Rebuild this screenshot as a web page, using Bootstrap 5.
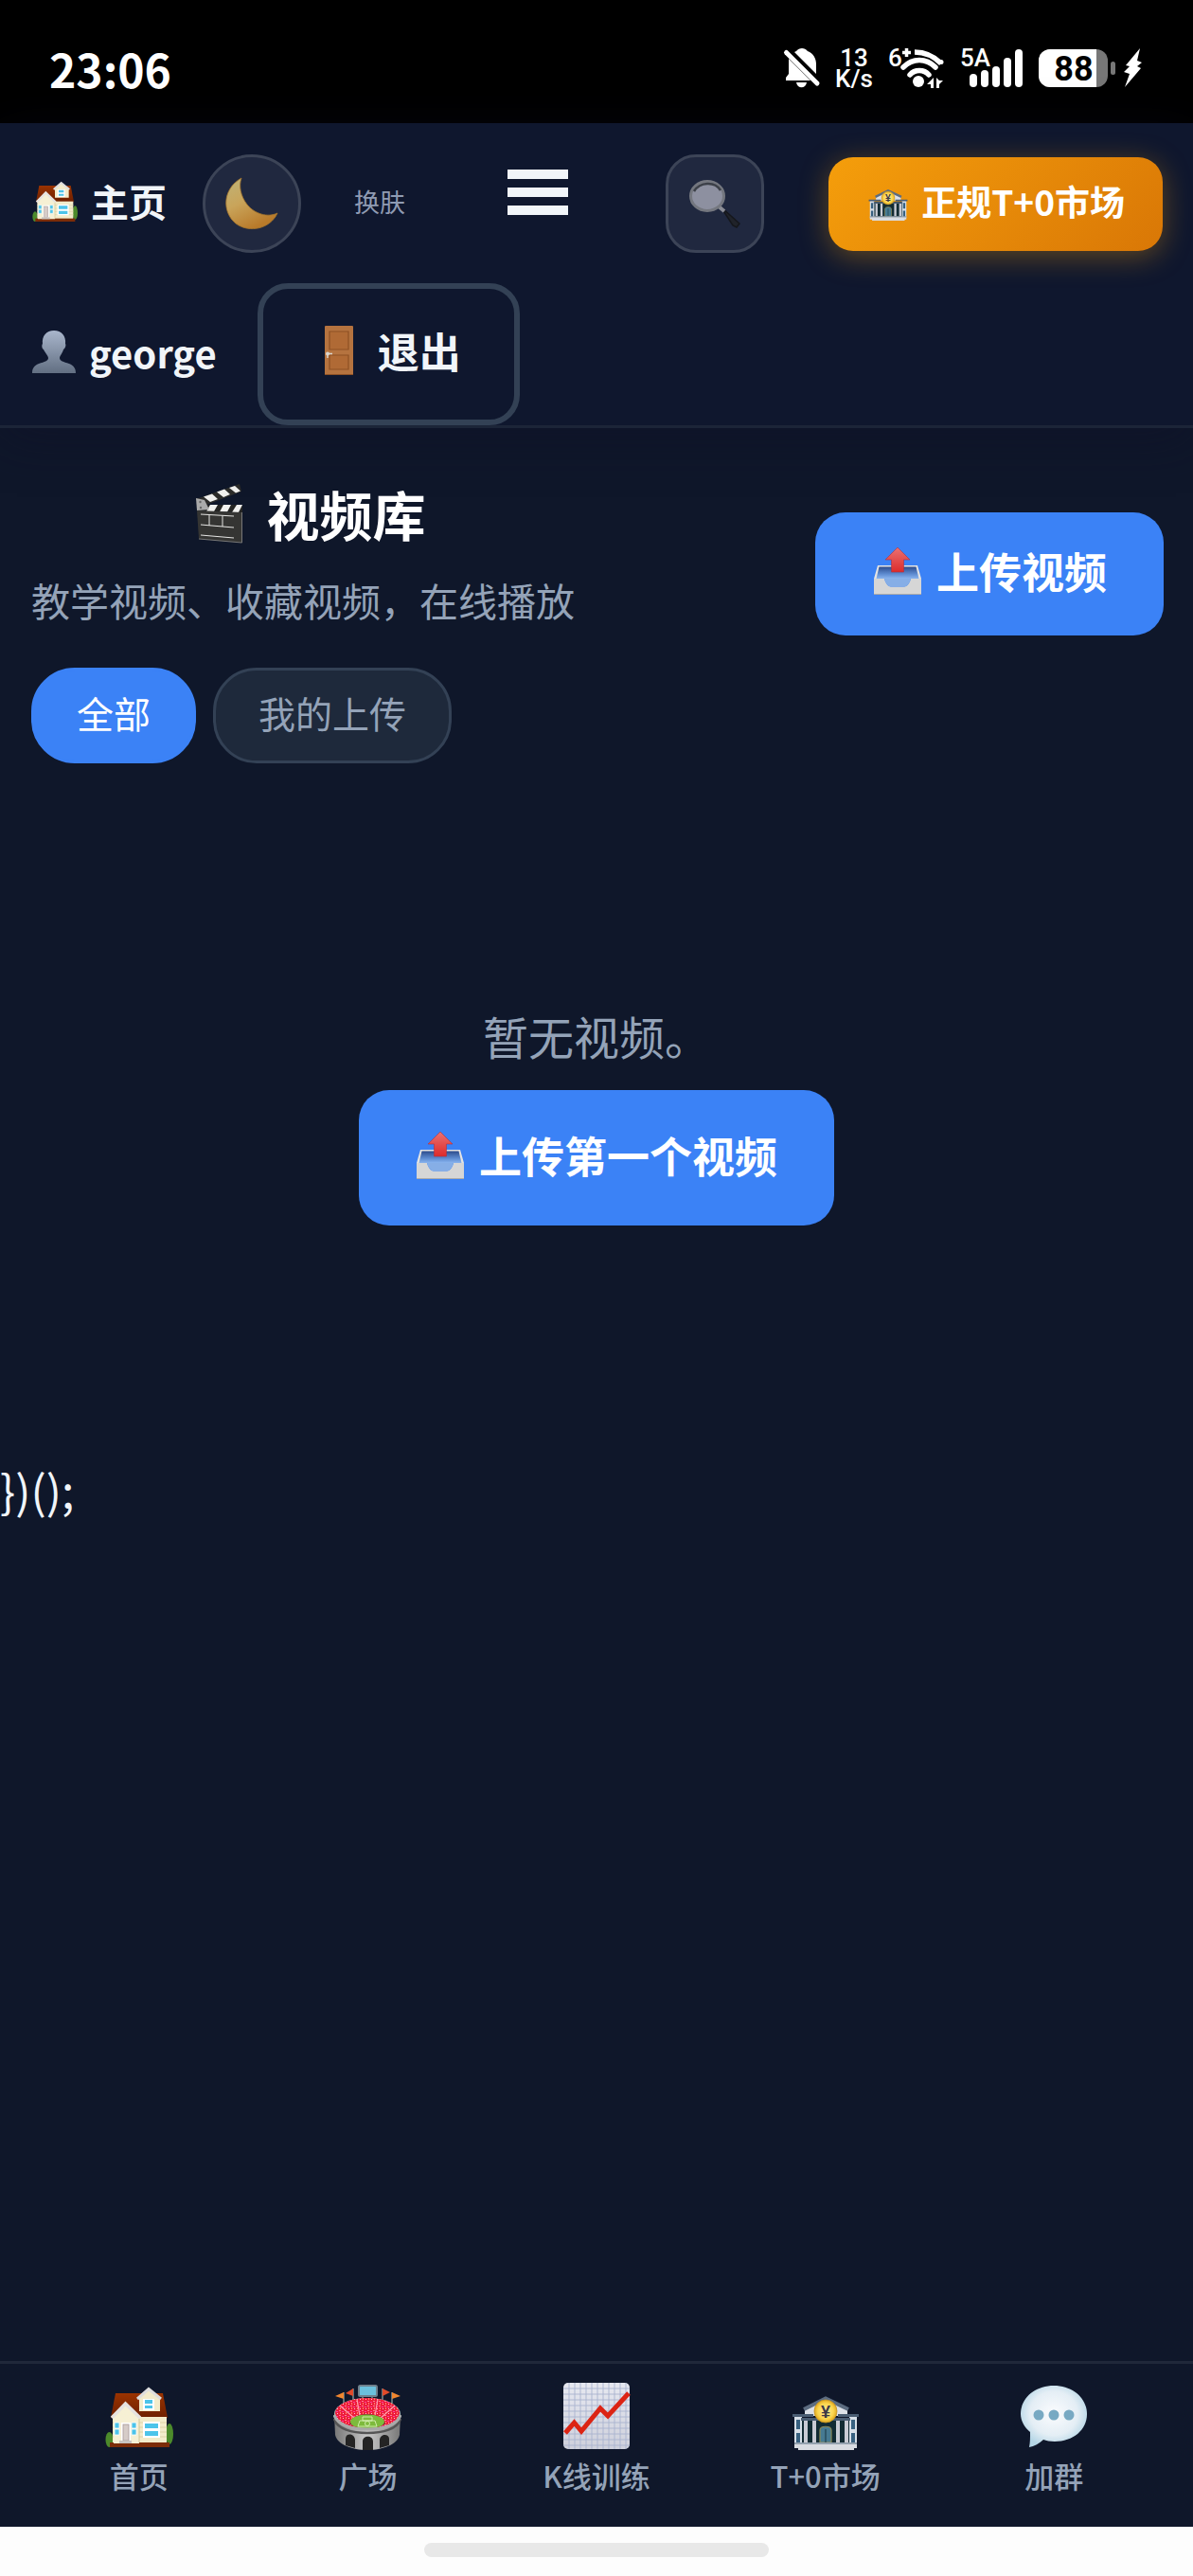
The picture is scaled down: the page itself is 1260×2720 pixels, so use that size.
<!DOCTYPE html>
<html lang="zh-CN" data-bs-theme="dark">
<head>
<meta charset="utf-8">
<meta name="viewport" content="width=device-width, initial-scale=1">
<title>视频库</title>
<link href="https://cdn.jsdelivr.net/npm/bootstrap@5.3.0/dist/css/bootstrap.min.css" rel="stylesheet">
<style>
  :root { --ink:#f1f5f9; --muted:#94a3b8; --line:#334155; --brand:#3b82f6; }
  body { background:#0f172a; color:var(--ink); font-family:"Noto Sans CJK SC",sans-serif; font-size:48px; line-height:72px; }
  svg { display:block; flex:none; overflow:visible; }
  a { color:inherit; text-decoration:none; }
  button { font-family:inherit; }

  /* phone status bar */
  .statusbar { background:#000; height:130px; padding:0 54px 28px 52px; color:#fff; }
  .clock { font-size:48px; line-height:60px; font-weight:700; }
  .speed { font-family:Roboto,sans-serif; font-size:26px; line-height:22px; font-weight:500; }
  .status-icons svg { font-family:Roboto,sans-serif; font-weight:500; }

  /* top bar */
  .topbar { background:#0f172e; border-bottom:3px solid #1c2538; padding:33px 32px 0 34px; row-gap:32px; box-shadow:0 12px 50px rgba(15,15,40,.45); position:relative; }
  .home-link { font-size:40px; line-height:60px; font-weight:700; gap:14px; padding-bottom:6px; margin-right:38px; }
  .tool-btn { width:104px; height:104px; padding:0; background:#20283f; border:3px solid #3c4457; }
  .round-btn { border-radius:50%; }
  .square-btn { border-radius:32px; margin-right:16px; }
  .skin-label { font-size:27px; line-height:40px; color:#8f9bb3; margin:0 108px 4px 56px; }
  .burger { width:64px; padding:0; border:0; background:none; gap:9px; margin:0 103px 24px 0; }
  .burger span { height:10px; width:100%; background:var(--ink); }
  .market-btn { height:99px; padding:0 40px 6px 42px; gap:14px; border:0; border-radius:26px; color:#fff; font-size:37px; font-weight:700; line-height:56px; background:linear-gradient(135deg,#f59e0b,#d97706); box-shadow:0 6px 30px rgba(245,158,11,.36); }
  .user-name { font-size:40px; line-height:60px; font-weight:700; gap:14px; padding-bottom:4px; margin-right:43px; }
  .logout-btn { height:150px; padding:0 56px 8px 65px; gap:26px; border:6px solid var(--line); border-radius:32px; background:none; color:var(--ink); font-size:44px; font-weight:700; line-height:66px; }

  /* page */
  .page-head { padding:54px 31px 0 33px; }
  .page-title { font-size:56px; line-height:72px; font-weight:700; gap:25px; margin-bottom:24px; }
  .page-sub { font-size:41px; line-height:62px; color:var(--muted); margin-bottom:41px; }
  .upload-btn { background:var(--brand); border:0; border-radius:32px; color:#fff; font-weight:700; font-size:45px; line-height:66px; gap:16px; }
  .upload-top { height:130px; padding:0 60px 6px 62px; }
  .upload-first { height:143px; padding:0 60px 6px 61px; }
  .filters { padding:0 33px; gap:18px; }
  .filter-btn { height:101px; border-radius:46px; border:3px solid var(--line); background:#1e293b; color:var(--muted); font-size:39px; line-height:57px; padding:0 45px 6px; }
  .filter-btn.on { background:var(--brand); border-color:var(--brand); color:#fff; }
  .empty-box { padding:257px 33px 250px; }
  .empty-text { line-height:60px; color:var(--muted); margin-bottom:28px; }
  .tail-text { line-height:56px; }

  /* bottom navigation */
  .tabbar { border-top:3px solid #20283a; background:#0f172a; padding:19px 26px 31px; }
  .tab-link { flex:1 1 0; color:var(--muted); font-size:31px; line-height:46px; gap:4px; font-weight:500; }
  .gesture { background:#fdfdfd; height:52px; padding-bottom:3px; }
  .gesture span { width:364px; height:15px; border-radius:8px; background:#e8e8e8; }
</style>
</head>
<body class="d-flex flex-column min-vh-100">

<!-- shared picture symbols -->
<svg width="0" height="0" class="position-absolute" aria-hidden="true">
  <defs>
    <linearGradient id="gMoon" x1="0" y1="0" x2=".5" y2="1"><stop offset="0" stop-color="#bfb478"/><stop offset=".5" stop-color="#c9a45a"/><stop offset="1" stop-color="#b87a2a"/></linearGradient>
    <linearGradient id="gBust" x1="0" y1="0" x2="0" y2="1"><stop offset="0" stop-color="#a9b6cc"/><stop offset="1" stop-color="#626f82"/></linearGradient>
    <linearGradient id="gRoof" x1="0" y1="0" x2="0" y2="1"><stop offset="0" stop-color="#9a3300"/><stop offset="1" stop-color="#6e2000"/></linearGradient>
    <linearGradient id="gStone" x1="0" y1="0" x2="1" y2="0"><stop offset="0" stop-color="#777"/><stop offset=".5" stop-color="#c9c9c9"/><stop offset="1" stop-color="#777"/></linearGradient>
    <linearGradient id="gRed" x1="0" y1="0" x2="0" y2="1"><stop offset="0" stop-color="#ea7272"/><stop offset="1" stop-color="#dd2b2b"/></linearGradient>
    <linearGradient id="gPaper" x1="0" y1="0" x2="0" y2="1"><stop offset="0" stop-color="#e6e8f0"/><stop offset="1" stop-color="#cfd1dc"/></linearGradient>
    <linearGradient id="gTray" x1="0" y1="0" x2="0" y2="1"><stop offset="0" stop-color="#2d4c8c"/><stop offset=".6" stop-color="#5d8bd0"/><stop offset="1" stop-color="#8ab4ee"/></linearGradient>
    <radialGradient id="gBubble" cx=".5" cy=".45" r=".55"><stop offset="0" stop-color="#fbfcfe"/><stop offset=".65" stop-color="#e4eef5"/><stop offset="1" stop-color="#b5d6e6"/></radialGradient>
    <radialGradient id="gCoin"><stop offset="0" stop-color="#fff0a0"/><stop offset=".7" stop-color="#fbd44b"/><stop offset="1" stop-color="#e0a820"/></radialGradient>
    <pattern id="pCrowd" width="6" height="5" patternUnits="userSpaceOnUse"><rect width="6" height="5" fill="#ee1c3a"/><rect width="2" height="1" fill="#ff7a9a"/><rect x="3" y="1" width="2" height="1" fill="#ff3fa0"/><rect x="1" y="2" width="1" height="2" fill="#ff8066"/><rect x="4" y="3" width="1" height="1" fill="#ffc0c8"/></pattern>
    <symbol id="house" viewBox="0 0 72 72">
      <ellipse cx="4.500" cy="61" rx="4" ry="8" fill="#4c8a2b"/><ellipse cx="68" cy="55" rx="4" ry="11" fill="#4c8a2b"/>
      <path d="M11 12H61L66 38H6Z" fill="url(#gRoof)"/>
      <rect x="8" y="37" width="57" height="29" fill="#f3eccb"/>
      <path d="M8 43h57M8 48h57M8 53h57M8 58h57" stroke="#ddd3a8" stroke-width="1"/>
      <rect x="5" y="64" width="63" height="5" fill="#7c2c08"/>
      <path d="M36 31V16L46 8 58 17V31Z" fill="#f3eccb"/><path d="M34 18 46 7.500 59 18" fill="none" stroke="#dedede" stroke-width="3"/>
      <rect x="40" y="18" width="12" height="12" fill="#fff"/><path d="M42 19h8v4h-8zM42 25h8v3h-8z" fill="#4cc4ea"/>
      <path d="M9 65V36L21.500 23 36 38V65Z" fill="#f6f0d4"/><path d="M7 38 21.500 23 37 38" fill="none" stroke="#e6e3e0" stroke-width="3.500"/>
      <path d="M36 39V64" stroke="#d2c89c"/>
      <rect x="17" y="43" width="10" height="21" fill="#fff"/><rect x="19" y="45" width="6" height="17" fill="#d6ccc8" stroke="#a89a98" stroke-width=".8"/><rect x="15" y="62" width="13" height="3" fill="#c9c4c0"/>
      <path d="M10 43h5v6h-5zM10 50h5v6h-5zM28 43h5v6h-5zM28 50h5v6h-5z" fill="#4cc4ea" stroke="#fff" stroke-width=".8"/>
      <rect x="40" y="42" width="18" height="17" fill="#fff"/><path d="M42 44h14v5H42zM42 52h14v5H42z" fill="#4cc4ea"/>
    </symbol>
    <symbol id="stadium" viewBox="0 0 72 72">
      <path d="M11 11v14M21 7v14M52 7v14M62 11v14M31 15v5M41 15v5" stroke="#9aa" stroke-width="1.200"/>
      <path d="M11 11 2 15l9 3zM62 11l9 4-9 3z" fill="#f0862f"/><path d="M21 7l-8 5 8 3zM52 7l8 4-8 4z" fill="#e04a2a"/>
      <rect x="27" y="4" width="19" height="11" rx="1.500" fill="#6bc0dc" stroke="#6f808c" stroke-width="2"/>
      <path d="M1 34 2 56C4 66 20 72 36 72S68 66 70 56L71 34Z" fill="url(#gStone)"/>
      <ellipse cx="36" cy="34" rx="35" ry="17" fill="#b9b9b9"/>
      <ellipse cx="36" cy="33" rx="34" ry="16" fill="url(#pCrowd)"/>
      <path d="M25 18l3 18M47 18l-3 18M7 25l16 14M65 25 49 39" stroke="#ff9cab" stroke-width="1.200"/>
      <path d="M17 44C20 38 27 34 36 34s16 4 19 10C50 50 22 50 17 44Z" fill="#7a2434"/>
      <ellipse cx="36" cy="42" rx="18" ry="7.500" fill="#7dba3c"/>
      <path d="M28 41h16l2 6H26zM31 37h10v4H31z" fill="none" stroke="#d7efb5" stroke-width=".9"/><circle cx="36" cy="44" r="2.500" fill="none" stroke="#d7efb5" stroke-width=".9"/>
      <path d="M1 39C4 50 20 54 36 54S68 50 71 39" fill="none" stroke="#555" stroke-width="2.500"/><path d="M1 35C4 46 20 50 36 50S68 46 71 35" fill="none" stroke="#a9a9a9" stroke-width="3"/>
      <path d="M13 67V60c0-6 9-6 10 1v9zM31 72V63c0-7 11-7 11 0v9zM49 70V61c1-7 10-6 10-1v7z" fill="#242424"/>
    </symbol>
    <symbol id="chart" viewBox="0 0 72 72">
      <rect x="1" y="1" width="70" height="70" rx="5" fill="url(#gPaper)"/>
      <path d="M7 1v70M13 1v70M19 1v70M25 1v70M31 1v70M37 1v70M43 1v70M49 1v70M55 1v70M61 1v70M67 1v70M1 7h70M1 13h70M1 19h70M1 25h70M1 31h70M1 37h70M1 43h70M1 49h70M1 55h70M1 61h70M1 67h70" stroke="#a9b3cf" stroke-width=".9"/>
      <path d="M3 54 12.500 43 20 52 40 28 48 36 70 12" fill="none" stroke="#dc2414" stroke-width="5"/>
    </symbol>
    <symbol id="bank" viewBox="0 0 72 72">
      <path d="M14 36V28L36 17 59 28v8Z" fill="#dde1e8"/><path d="M13 29 36 17.500 60 29" fill="none" stroke="#5c6c80" stroke-width="4"/>
      <rect x="9" y="38" width="54" height="27" fill="#122b33"/>
      <rect x="3" y="36" width="8" height="31" fill="#d7dfe8"/><rect x="61" y="36" width="8" height="31" fill="#d7dfe8"/>
      <path d="M1 34h22v3H1zM49 34h22v3H49zM10 38h52v3H10z" fill="#4a5d73"/>
      <path d="M5 40h4v10H5zM5 54h4v11H5zM63 40h4v10h-4zM63 54h4v11h-4z" fill="#376080"/>
      <path d="M13 41h4v23h-4zM22 41h4v23h-4zM47 41h4v23h-4zM56 41h4v23h-4z" fill="#c9cbd4"/>
      <path d="M30 64V51c0-5 12-5 12 0v13Z" fill="#467a92" stroke="#8d8a58" stroke-width="1.200"/><path d="M36 50v14" stroke="#183440"/>
      <path d="M3 64h66v3H3z" fill="#93a1ae"/><path d="M3 66h66v4H66v2H7v-2H3z" fill="#d9dce2"/>
      <circle cx="36" cy="31" r="12" fill="url(#gCoin)" stroke="#c79423" stroke-width=".8"/>
      <text x="36" y="37.500" text-anchor="middle" font-family="Liberation Sans" font-weight="700" font-size="18" fill="#3d3a45">¥</text>
    </symbol>
    <symbol id="bubble" viewBox="0 0 72 72">
      <path d="M36 4C56 4 71 17 71 34S56 63 37 63C32 63 28 62 25 61 21 65 15 68 10 69 11 64 11 59 11 53 5 48 1 41 1 34 1 17 16 4 36 4Z" fill="url(#gBubble)"/>
      <g fill="#77a9c3"><circle cx="20" cy="35" r="5.500"/><circle cx="36" cy="35" r="5.500"/><circle cx="52" cy="35" r="5.500"/></g>
    </symbol>
    <symbol id="tray" viewBox="0 0 50 50">
      <path d="M4 19H46L50 33H0Z" fill="#e4e4e4"/><path d="M5.500 20.500H44.500L47.500 33H2.500Z" fill="url(#gTray)"/>
      <path d="M0 33H11C13 40 16 41.500 19 41.500H31C34 41.500 37 40 39 33H50V50H0Z" fill="#d6d6d6"/><path d="M11 33H39C37 40 34 41.500 31 41.500H19C16 41.500 13 40 11 33Z" fill="#86aee6"/><path d="M0 49h50v1H0z" fill="#aaa"/>
      <path d="M25 0 38 13H31.500V26H18.500V13H12Z" fill="url(#gRed)" stroke="#b03040" stroke-width=".6"/>
    </symbol>
  </defs>
</svg>

<div class="statusbar d-flex align-items-end">
  <div class="d-flex align-items-center w-100 justify-content-between">
    <span class="clock">23:06</span>
    <div class="status-icons d-flex align-items-center">
      <svg width="38" height="44" viewBox="0 0 38 44" fill="#fff" aria-label="静音"><path d="M13 4C16 0 22 0 25 4 31 6 34 12 34 18V28L11 5Z"/><path d="M5 12 28 35H2V32L5 28Z"/><path d="M13 37H24C23 44 14 44 13 37Z"/><path d="M2.500 5.500 35 38" stroke="#fff" stroke-width="5" stroke-linecap="round"/></svg>
      <div class="speed text-center ms-3 me-3"><div>13</div><div>K/s</div></div>
      <svg width="60" height="44" viewBox="0 0 60 44" fill="none" stroke="#fff" stroke-width="5.500" aria-label="Wi-Fi">
        <path d="M28 5C39 5 49 10 56 17" stroke-linecap="butt"/><circle cx="56" cy="15.500" r="2.500" fill="#fff" stroke="none"/><path d="M16 21C26 11 40 11 50 21M23 29C28 23 38 23 43 29" stroke-linecap="round"/><circle cx="32" cy="36" r="6" fill="#fff" stroke="none"/>
        <path d="M48 32v11h-3v-4h-4zM51 32v11h3v-4l4-4h-4z" fill="#fff" stroke="none"/>
        <text x="0" y="20" font-size="26" fill="#fff" stroke="none">6</text><path d="M15 5.500h9M19.500 1v9" stroke-width="3.500"/></svg>
      <svg class="ms-3" width="67" height="44" viewBox="0 0 67 44" fill="#fff" aria-label="信号"><text x="0" y="20" font-size="26">5A</text><rect x="10" y="28" width="8" height="14" rx="4"/><rect x="22" y="24" width="8" height="18" rx="4"/><rect x="34" y="20" width="8" height="22" rx="4"/><rect x="46" y="11" width="8" height="31" rx="4"/><rect x="58" y="2" width="8" height="40" rx="4"/></svg>
      <svg class="ms-3" width="82" height="44" viewBox="0 0 82 44" aria-label="电量"><rect x="0" y="2" width="73" height="40" rx="12" fill="#777"/><path d="M12 2H61V42H12A12 12 0 0 1 0 30V14A12 12 0 0 1 12 2Z" fill="#fff"/><rect x="76" y="15" width="5" height="14" rx="2.500" fill="#777"/><text x="37" y="35" text-anchor="middle" font-size="36" font-weight="700" fill="#000">88</text></svg>
      <svg class="ms-2" width="19" height="42" viewBox="0 0 19 42" fill="#fff" aria-label="充电中"><path d="M17 0 2 18 6 19 0 25 6 27 1 41 18 21 14 19 19 15 14 13Z"/></svg>
    </div>
  </div>
</div>

<header class="topbar d-flex flex-column">
  <nav class="d-flex align-items-center">
    <a href="#" class="home-link d-flex align-items-center"><svg width="48" height="48"><use href="#house"/></svg><span>主页</span></a>
    <button type="button" class="tool-btn round-btn d-flex align-items-center justify-content-center" aria-label="夜间模式">
      <svg width="54" height="54" viewBox="0 0 54 54"><path d="M16 0C-4 11-5 36 10 48 25 59 47 53 54 37 44 42 30 38 22 28 15 19 13 8 16 0Z" fill="url(#gMoon)" stroke="#a5752c" stroke-width=".8"/></svg>
    </button>
    <span class="skin-label text-nowrap">换肤</span>
    <button type="button" class="burger d-flex flex-column" aria-label="菜单"><span></span><span></span><span></span></button>
    <button type="button" class="tool-btn square-btn d-flex align-items-center justify-content-center" aria-label="搜索">
      <svg width="54" height="50" viewBox="0 0 54 50"><path d="M33 28 53 46 50 50 46 48Z" fill="#20232a" stroke="#15171c" stroke-width="1.500"/><path d="M31 28 37 33" stroke="#8b8d96" stroke-width="4"/><ellipse cx="19" cy="17" rx="17.500" ry="15.500" fill="#8d90a0" stroke="#74777f" stroke-width="3"/><path d="M5 12C11 2 27 1 33 11" fill="none" stroke="#3c4048" stroke-width="2.500"/></svg>
    </button>
    <button type="button" class="market-btn d-flex align-items-center text-nowrap ms-auto"><svg width="42" height="42"><use href="#bank"/></svg><span>正规T+0市场</span></button>
  </nav>
  <div class="d-flex align-items-center">
    <a href="#" class="user-name d-flex align-items-center"><svg width="46" height="46" viewBox="0 0 46 46"><path d="M23 0C31 0 36 6 35 14 36 15 35 19 33 20 32 24 29 27 29 29 29 32 33 33 39 35 44 37 46 40 46 45H0C0 40 2 37 7 35 13 33 17 32 17 29 17 27 14 24 12 20 10 19 10 15 11 14 10 6 15 0 23 0Z" fill="url(#gBust)"/></svg><span>george</span></a>
    <button type="button" class="logout-btn d-flex align-items-center">
      <svg width="30" height="52" viewBox="0 0 30 52"><rect width="30" height="52" rx="1" fill="#b5733f"/><path d="M5 6h20v19H5zM5 31h20v15H5z" fill="#b06a35" stroke="#8d5024" stroke-width="1.200"/><path d="M0 51.500H30" stroke="#8d5024"/><circle cx="3" cy="29.500" r="2" fill="#d9d5ce"/><path d="M3 29.500h5M3 30v4" stroke="#d9d5ce" stroke-width="1.500"/></svg><span>退出</span>
    </button>
  </div>
</header>

<main class="flex-grow-1">
  <section class="page-head d-flex align-items-center justify-content-between">
    <div>
      <h1 class="page-title d-flex align-items-center justify-content-center ps-3">
        <svg width="50" height="62" viewBox="0 0 50 62"><path d="M0 16 46 0 48 8 6 24Z" fill="#2c2c2a"/><path d="M8 13.500 17 10.500 23 16 15 19ZM22 8.500 30 5.500 36 11 29 14ZM35 4 41 2 47 7.500 42 9.500Z" fill="#f0f0ee"/><path d="M1 22H49V30L1 28Z" fill="#252523"/><path d="M15 22h8l-4 7h-8zM29 22h8l-4 7.500h-8zM43 22h6l-4 8h-7z" fill="#f0f0ee"/><path d="M0 15 9 17 14 27 1 28Z" fill="#aaa"/><circle cx="4.500" cy="19" r="1.200" fill="#666"/><circle cx="5" cy="25" r="1.200" fill="#666"/><path d="M1 28 49 30V62L3 58Z" fill="#353533"/><path d="M5 32 40 34M5 43 40 46M5 54 40 57M14 33V44M28 33.500V45" stroke="#e5e5e3" stroke-width="1"/><path d="M48.500 30V62L3 58" fill="none" stroke="#777" stroke-width="1"/></svg>
        <span>视频库</span>
      </h1>
      <p class="page-sub">教学视频、收藏视频，在线播放</p>
    </div>
    <button type="button" class="upload-btn upload-top d-flex align-items-center text-nowrap"><svg width="50" height="50"><use href="#tray"/></svg><span>上传视频</span></button>
  </section>

  <div class="filters d-flex">
    <button type="button" class="filter-btn on">全部</button>
    <button type="button" class="filter-btn">我的上传</button>
  </div>

  <section class="empty-box d-flex flex-column align-items-center">
    <p class="empty-text">暂无视频。</p>
    <button type="button" class="upload-btn upload-first d-flex align-items-center text-nowrap"><svg width="50" height="50"><use href="#tray"/></svg><span>上传第一个视频</span></button>
  </section>
  <div class="tail-text">})();</div>
</main>

<nav class="tabbar d-flex">
  <a href="#" class="tab-link d-flex flex-column align-items-center"><svg width="72" height="72"><use href="#house"/></svg><span>首页</span></a>
  <a href="#" class="tab-link d-flex flex-column align-items-center"><svg width="72" height="72"><use href="#stadium"/></svg><span>广场</span></a>
  <a href="#" class="tab-link d-flex flex-column align-items-center"><svg width="72" height="72"><use href="#chart"/></svg><span>K线训练</span></a>
  <a href="#" class="tab-link d-flex flex-column align-items-center"><svg width="72" height="72"><use href="#bank"/></svg><span>T+0市场</span></a>
  <a href="#" class="tab-link d-flex flex-column align-items-center"><svg width="72" height="72"><use href="#bubble"/></svg><span>加群</span></a>
</nav>
<div class="gesture d-flex align-items-center justify-content-center"><span></span></div>

<script src="https://cdn.jsdelivr.net/npm/bootstrap@5.3.0/dist/js/bootstrap.bundle.min.js"></script>
</body>
</html>
